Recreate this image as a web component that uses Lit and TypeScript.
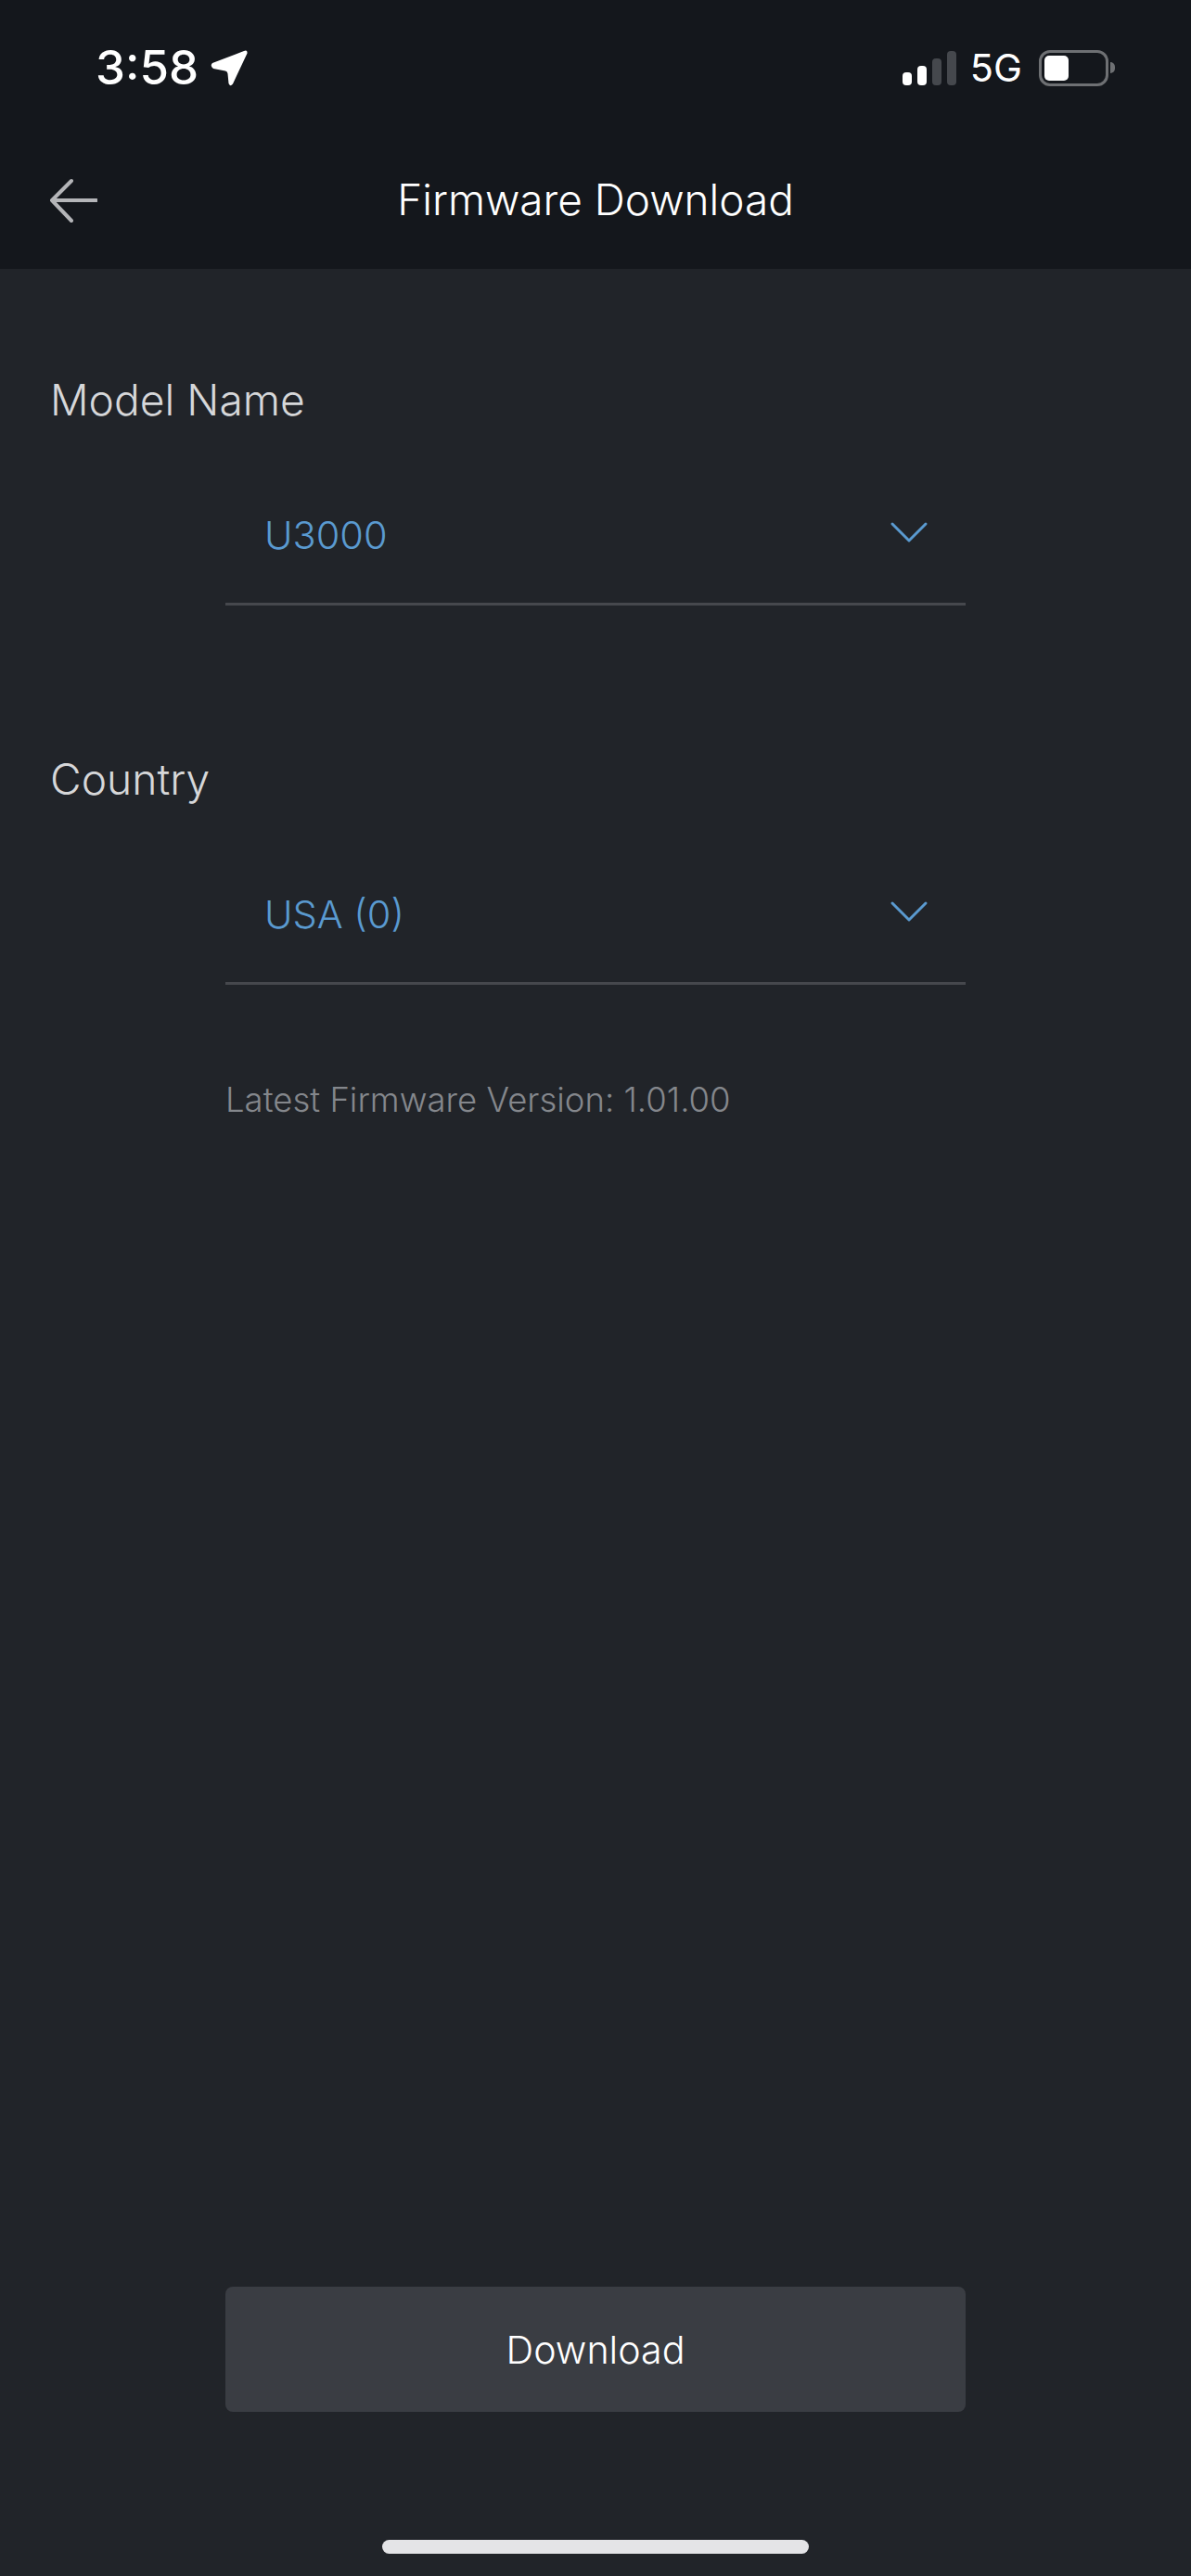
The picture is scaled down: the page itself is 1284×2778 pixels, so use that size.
import { LitElement, html, css } from "lit";
import { customElement } from "lit/decorators.js";

@customElement("app-root")
export class AppRoot extends LitElement {
  static styles = css`
    :host {
      display: block;
      width: 1284px;
      height: 2778px;
      background: #212429;
      font-family: Inter, "Liberation Sans", sans-serif;
      overflow: hidden;
    }
    .page { display: flex; flex-direction: column; height: 2778px; }
    .top { background: #14171c; height: 290px; box-sizing: border-box; flex: none; }
    .status { height: 146px; display: flex; align-items: flex-start; justify-content: space-between; box-sizing: border-box; padding: 47px 82px 0 103px; }
    .status-left { display: flex; align-items: center; gap: 13px; height: 52px; }
    .time { color: #fff; font-size: 51px; font-weight: 500; line-height: 52px; }
    .status-right { display: flex; align-items: center; height: 52px; }
    .signal { display: flex; align-items: flex-end; gap: 6px; height: 37px; margin-right: 15px; }
    .signal i { display: block; width: 10px; border-radius: 4px; background: #fff; }
    .signal i.off { background: #45484d; }
    .h1 { height: 14px; } .h2 { height: 21px; } .h3 { height: 29px; } .h4 { height: 37px; }
    .net { color: #fff; font-size: 41.5px; line-height: 52px; font-weight: 400; margin-right: 18px; }
    .batt { display: flex; align-items: center; gap: 2px; }
    .batt-body { width: 75px; height: 39px; box-sizing: border-box; border: 3px solid #6e7073; border-radius: 12px; padding: 3px; }
    .batt-fill { width: 26px; height: 100%; background: #fff; border-radius: 5px; }
    .batt-nub { width: 5px; height: 12px; background: #6e7073; border-radius: 0 6px 6px 0; }
    .nav { height: 144px; display: grid; grid-template-columns: 1fr auto 1fr; align-items: center; padding: 0 53px 2px; box-sizing: border-box; margin-top: -1px; }
    .nav h1 { margin: 0; font-size: 45.9px; font-weight: 350; color: #fff; white-space: nowrap; line-height: 56px; }
    .nav svg { display: block; }
    .content { flex: 1; display: flex; flex-direction: column; min-height: 0; }
    .label { color: #d6d7d9; font-size: 46.2px; font-weight: 350; line-height: 56px; padding-left: 54px; }
    .l1 { margin-top: 113px; }
    .l2 { margin-top: 159px; }
    .select { margin: 0 243px; height: 194px; border-bottom: 3px solid #46484d; box-sizing: border-box; display: flex; justify-content: space-between; align-items: center; padding: 44px 40px 0 42px; }
    .select span { color: #5a9ad0; font-size: 41.5px; font-weight: 350; line-height: 52px; }
    .select svg { display: block; margin-bottom: 6px; }
    .hint { color: #84878c; font-size: 36.5px; font-weight: 350; line-height: 44px; margin: 102px 243px 0; }
    .spacer { flex: 1; }
    .btn { margin: 0 243px; height: 135px; background: #3a3d43; border-radius: 8px; color: #fff; font-size: 41.2px; font-weight: 350; display: flex; align-items: center; justify-content: center; }
    .home-wrap { height: 177px; display: flex; justify-content: center; box-sizing: border-box; padding-top: 138px; }
    .home { width: 460px; height: 15px; background: #e4e4e7; border-radius: 8px; }
  `;

  render() {
    const chevron = html`<svg width="42" height="26" viewBox="0 0 42 26" fill="none" stroke="#5a9ad0" stroke-width="3" stroke-linecap="round" stroke-linejoin="round"><path d="M3 4 L21 22 L39 4"/></svg>`;
    return html`<div class="page">
      <div class="top">
        <div class="status">
          <div class="status-left">
            <span class="time">3:58</span>
            <svg width="40" height="39" viewBox="0 0 40 39">
              <path d="M2 14 L36 1 Q40 -0.5 39.5 3.5 L24 36.5 Q21 40 19.5 36 L18.5 25.5 Q18.3 23 16 22.6 L3 20 Q-1 17 2 14 Z" fill="#fff"/>
            </svg>
          </div>
          <div class="status-right">
            <div class="signal">
              <i class="h1"></i><i class="h2"></i><i class="h3 off"></i><i class="h4 off"></i>
            </div>
            <span class="net">5G</span>
            <div class="batt">
              <div class="batt-body"><div class="batt-fill"></div></div>
              <div class="batt-nub"></div>
            </div>
          </div>
        </div>
        <div class="nav">
          <svg width="52" height="48" viewBox="0 0 52 48" fill="none" stroke="#b4b5b8" stroke-width="4" stroke-linecap="round" stroke-linejoin="round">
            <path d="M51 24 H4 M24 3 L3 24 L24 46"/>
          </svg>
          <h1>Firmware Download</h1>
          <span></span>
        </div>
      </div>
      <div class="content">
        <div class="label l1">Model Name</div>
        <div class="select"><span>U3000</span>${chevron}</div>
        <div class="label l2">Country</div>
        <div class="select"><span>USA (0)</span>${chevron}</div>
        <div class="hint">Latest Firmware Version: 1.01.00</div>
        <div class="spacer"></div>
        <div class="btn">Download</div>
        <div class="home-wrap"><div class="home"></div></div>
      </div>
    </div>`;
  }
}
